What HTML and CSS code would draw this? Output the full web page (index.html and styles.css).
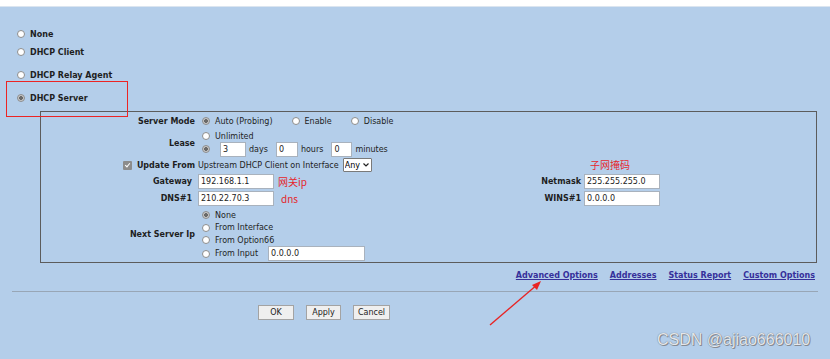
FILE: index.html
```html
<!DOCTYPE html>
<html lang="en">
<head>
  <meta charset="UTF-8" />
  <title>DHCP Settings</title>
  <link rel="stylesheet" href="styles.css">
</head>
<body>
  <div class="topbar"></div>

  <form class="page">
    <ul class="modes">
      <li class="mode"><label><input type="radio" name="mode" /> None</label></li>
      <li class="mode m-client"><label><input type="radio" name="mode" /> DHCP Client</label></li>
      <li class="mode m-relay"><label><input type="radio" name="mode" /> DHCP Relay Agent</label></li>
      <li class="mode m-server"><label><input type="radio" name="mode" checked /> DHCP Server</label></li>
    </ul>

    <div class="server-box">
      <div class="grid">
        <div class="lbl">Server Mode</div>
        <div class="val wide line14">
          <label class="opt"><input type="radio" name="smode" checked /> Auto (Probing)</label>
          <label class="opt"><input type="radio" name="smode" /> Enable</label>
          <label class="opt"><input type="radio" name="smode" /> Disable</label>
        </div>

        <div class="lbl">Lease</div>
        <div class="val wide stack">
          <label class="line"><input type="radio" name="lease" /> Unlimited</label>
          <label class="line line14"><input type="radio" name="lease" checked />
            <input class="txt t-days" value="3" /><span class="unit">days</span>
            <input class="txt t-hours" value="0" /><span class="unit">hours</span>
            <input class="txt t-min" value="0" /><span class="unit">minutes</span>
          </label>
        </div>

        <div class="lbl line14"><input type="checkbox" class="chk" checked /> Update From</div>
        <div class="val line14">
          <span class="plain">Upstream DHCP Client on Interface</span>
          <span class="sel-wrap">
            <select class="sel"><option>Any</option></select>
            <svg class="chev" width="6" height="4" viewBox="0 0 6 4"><path d="M0.5 0.5 L3 3 L5.5 0.5" fill="none" stroke="#222" stroke-width="1.2"/></svg>
          </span>
        </div>
        <div></div>
        <div class="val"><span class="note n-mask">子网掩码</span></div>

        <div class="lbl">Gateway</div>
        <div class="val"><input class="txt t-ip" value="192.168.1.1" /><span class="note n-gw">网关ip</span></div>
        <div class="lbl">Netmask</div>
        <div class="val"><input class="txt t-ip" value="255.255.255.0" /></div>

        <div class="lbl">DNS#1</div>
        <div class="val"><input class="txt t-ip" value="210.22.70.3" /><span class="note n-dns">dns</span></div>
        <div class="lbl">WINS#1</div>
        <div class="val"><input class="txt t-ip" value="0.0.0.0" /></div>

        <div class="lbl next-lbl">Next Server Ip</div>
        <div class="val wide stack next-val">
          <label class="line"><input type="radio" name="next" checked /> None</label>
          <label class="line"><input type="radio" name="next" /> From Interface</label>
          <label class="line"><input type="radio" name="next" /> From Option66</label>
          <label class="line line14"><input type="radio" name="next" /> From Input <input class="txt t-input" value="0.0.0.0" /></label>
        </div>
      </div>
    </div>

    <nav class="links">
      <a href="#">Advanced Options</a>
      <a href="#">Addresses</a>
      <a href="#">Status Report</a>
      <a href="#">Custom Options</a>
    </nav>

    <hr class="sep" />

    <div class="buttons">
      <button type="button" class="b-ok">OK</button>
      <button type="button" class="b-apply">Apply</button>
      <button type="button" class="b-cancel">Cancel</button>
    </div>
  </form>

  <!-- annotations -->
  <div class="red-box"></div>
  <svg class="arrow" width="830" height="359" viewBox="0 0 830 359">
    <line x1="490" y1="325" x2="538" y2="284" stroke="#e82424" stroke-width="1.4"/>
    <path d="M541 281 L532 285 L537 290 Z" fill="#e82424"/>
  </svg>
  <div class="watermark">CSDN @ajiao666010</div>
</body>
</html>
```

FILE: styles.css
```css
body {
  margin: 0;
  background: #b4ceea;
  font-family: "DejaVu Sans", Verdana, sans-serif;
  font-size: 8px;
  color: #1e1e1e;
  position: relative;
  height: 359px;
  overflow: hidden;
}
.topbar {
  height: 6px;
  background: #fff;
  border-bottom: 1px solid #dbe5f0;
}
.page {
  margin: 0;
}

/* radios and checkbox */
input[type="radio"] {
  appearance: none;
  width: 8px;
  height: 8px;
  margin: 0 5px 0 0;
  border: 1px solid #8d8d8d;
  border-radius: 50%;
  background: #fff;
  box-sizing: border-box;
  flex: none;
}
input[type="radio"]:checked {
  background: radial-gradient(circle, #6a6a6a 0 1.6px, #c9c9c9 2.2px);
}
.chk {
  appearance: none;
  width: 9px;
  height: 9px;
  margin: 0 5px 0 0;
  border-radius: 1px;
  background: #8c8c8c;
  position: relative;
  flex: none;
}
.chk::after {
  content: "";
  position: absolute;
  left: 3px;
  top: 1px;
  width: 2px;
  height: 4px;
  border: solid #fff;
  border-width: 0 1.3px 1.3px 0;
  transform: rotate(40deg);
}

/* mode list */
.modes {
  list-style: none;
  margin: 0;
  padding: 21px 0 0 17px;
}
.mode label {
  display: flex;
  align-items: center;
  height: 12px;
  font-weight: bold;
}
.m-client { margin-top: 6px; }
.m-relay { margin-top: 11px; }
.m-server { margin-top: 11px; }

/* server box */
.server-box {
  margin: 7px 0 0 40px;
  width: 777px;
  box-sizing: border-box;
  border: 1px solid #5c5c5c;
  padding: 2px 0 1px;
}
.grid {
  display: grid;
  grid-template-columns: 157px 308px 78px 1fr;
  row-gap: 2px;
  align-items: center;
}
.lbl {
  font-weight: bold;
  text-align: right;
  padding-right: 3px;
  display: flex;
  justify-content: flex-end;
  align-items: center;
}
.grid > .lbl:nth-child(9),
.grid > .lbl:nth-child(13) {
  padding-right: 6px;
}
.next-lbl,
.next-val {
  margin-top: 1px;
}
.val {
  display: flex;
  align-items: center;
}
.val.wide {
  grid-column: 2 / 5;
}
.line14 {
  height: 14px;
}
.stack {
  flex-direction: column;
  align-items: flex-start;
  padding-left: 4px;
}
.val.wide.line14 {
  padding-left: 4px;
}
.line {
  display: flex;
  align-items: center;
  height: 12px;
}
.next-val .line {
  height: 12.5px;
}
.stack .line14,
.next-val .line14 {
  height: 14px;
}
.opt {
  display: flex;
  align-items: center;
  margin-right: 19px;
}

.txt {
  height: 15px;
  box-sizing: border-box;
  border: 1px solid #a9b2bd;
  background: #fff;
  font-family: "DejaVu Sans", Verdana, sans-serif;
  font-size: 8px;
  color: #222;
  padding: 0 2px;
  margin: 0;
}
.t-days { width: 26px; margin-left: 5px; }
.t-hours { width: 22px; }
.t-min { width: 21px; }
.unit { margin: 0 8px 0 3px; }
.t-ip { width: 76px; }
.t-input { width: 97px; margin-left: 10px; }

.plain { color: #222; }
.sel-wrap {
  position: relative;
  margin-left: 4px;
  display: inline-block;
}
.sel {
  appearance: none;
  width: 29px;
  height: 14px;
  border: 1px solid #7a7a7a;
  border-radius: 1px;
  background: #fff;
  font-family: "DejaVu Sans", Verdana, sans-serif;
  font-size: 8px;
  padding: 0 0 0 1px;
  margin: 0;
  display: block;
}
.chev {
  position: absolute;
  right: 3px;
  top: 5px;
}

.note {
  font-family: "Noto Sans CJK SC", "Liberation Sans", sans-serif;
  font-size: 10px;
  color: #e5262b;
  line-height: 12px;
}
.n-gw { margin-left: 4px; }
.n-dns { margin-left: 7px; }
.n-mask { margin-left: 6px; }

/* links */
.links {
  display: flex;
  justify-content: flex-end;
  gap: 12px;
  padding-right: 15px;
  margin-top: 7px;
  line-height: 12px;
}
.links a {
  color: #36309a;
  font-weight: bold;
  text-decoration: underline;
}

.sep {
  margin: 9px 12px 0;
  border: none;
  border-top: 1px solid #98a6b6;
}

.buttons {
  display: flex;
  gap: 12px;
  margin: 13px 0 0 258px;
}
.buttons button {
  height: 15px;
  padding: 0;
  border: 1px solid #a3a3a3;
  background: #efefef;
  font-family: "DejaVu Sans", Verdana, sans-serif;
  font-size: 8px;
  color: #222;
}
.b-ok { width: 36px; }
.b-apply { width: 35px; }
.b-cancel { width: 37px; }

/* annotations */
.red-box {
  position: absolute;
  left: 6px;
  top: 81px;
  width: 120px;
  height: 34px;
  border: 1px solid #ec2424;
}
.arrow {
  position: absolute;
  left: 0;
  top: 0;
  pointer-events: none;
}
.watermark {
  position: absolute;
  left: 657px;
  top: 331px;
  font-family: "Liberation Sans", Arial, sans-serif;
  font-size: 16px;
  color: #e4e6ea;
  text-shadow: 0 0 1px #5c6068, 1px 1px 0 #8a9099;
}
```
